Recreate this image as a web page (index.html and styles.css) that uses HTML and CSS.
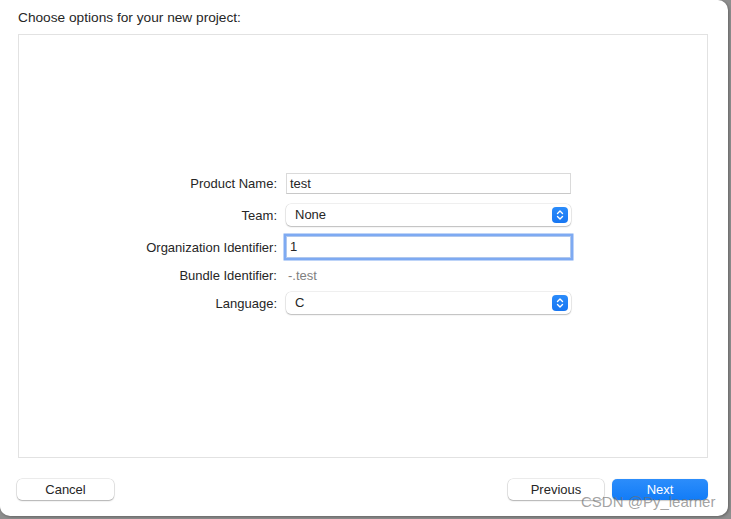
FILE: index.html
```html
<!DOCTYPE html>
<html lang="en">
<head>
    <meta charset="UTF-8">
    <meta name="viewport" content="width=device-width, initial-scale=1.0">
    <title>Choose options for your new project</title>
    <link rel="stylesheet" href="styles.css">
</head>
<body>
    <div class="window">
        <div class="title">Choose options for your new project:</div>
        <div class="panel">
            <div class="form">
                <label class="lbl">Product Name:</label>
                <div class="field">test</div>

                <label class="lbl">Team:</label>
                <div class="popup">None<span class="stepper"><svg width="16" height="16" viewBox="0 0 16 16"><path d="M5.5 6.5 L8 4 L10.5 6.5 M5.5 9.5 L8 12 L10.5 9.5" fill="none" stroke="#fff" stroke-width="1.4" stroke-linecap="round" stroke-linejoin="round"/></svg></span></div>

                <label class="lbl">Organization Identifier:</label>
                <div class="field focus">1</div>

                <label class="lbl">Bundle Identifier:</label>
                <div class="plain">-.test</div>

                <label class="lbl">Language:</label>
                <div class="popup">C<span class="stepper"><svg width="16" height="16" viewBox="0 0 16 16"><path d="M5.5 6.5 L8 4 L10.5 6.5 M5.5 9.5 L8 12 L10.5 9.5" fill="none" stroke="#fff" stroke-width="1.4" stroke-linecap="round" stroke-linejoin="round"/></svg></span></div>
            </div>
        </div>
        <div class="footer">
            <button class="btn">Cancel</button>
            <div class="right">
                <button class="btn">Previous</button>
                <button class="btn primary">Next</button>
            </div>
        </div>
        <div class="mark">CSDN @Py_learner</div>
    </div>
</body>
</html>
```

FILE: styles.css
```css
html, body {
    margin: 0;
    padding: 0;
}
body {
    width: 731px;
    height: 519px;
    background: #8e8e8e;
    font-family: "Liberation Sans", Arial, sans-serif;
    font-size: 13px;
    color: #262626;
    overflow: hidden;
}
.window {
    position: relative;
    width: 728px;
    height: 516px;
    background: #fff;
    border-radius: 0 10px 10px 10px;
    box-shadow: 1px 1px 3px rgba(0,0,0,0.3);
    display: flex;
    flex-direction: column;
}
.title {
    padding: 10px 0 0 18px;
    height: 24px;
    line-height: 15px;
    font-size: 13.7px;
}
.panel {
    margin: 0 20px 0 18px;
    height: 424px;
    border: 1px solid #e2e2e2;
    padding-top: 138px;
    box-sizing: border-box;
}
.form {
    display: grid;
    grid-template-columns: 258px 285px;
    grid-template-rows: 21px 22px 22px 14px 22px;
    column-gap: 9px;
    row-gap: 10px;
}
.lbl {
    text-align: right;
    align-self: center;
    color: #262626;
}
.field {
    border: 1px solid #dadada;
    border-bottom-color: #c8c8c8;
    padding: 0 3px;
    line-height: 19px;
}
.field.focus {
    border-color: #b0c8ee;
    box-shadow: 0 0 0 2.5px #7eaaf2;
    line-height: 20px;
}
.plain {
    align-self: center;
    color: #808080;
    padding-left: 2px;
}
.popup {
    position: relative;
    border-radius: 5px;
    background: #fff;
    box-shadow: 0 0 0 0.5px rgba(0,0,0,0.12), 0 1px 1.5px rgba(0,0,0,0.22);
    padding: 0 9px;
    line-height: 21px;
}
.stepper {
    position: absolute;
    right: 3px;
    top: 3px;
    width: 16px;
    height: 16px;
    border-radius: 4px;
    background: linear-gradient(#2a8bfa, #1776f2);
    display: block;
}
.stepper svg {
    display: block;
}
.footer {
    display: flex;
    justify-content: space-between;
    padding: 21px 20px 0 17px;
}
.right {
    display: flex;
    gap: 8px;
}
.btn {
    width: 97px;
    height: 21px;
    border: none;
    border-radius: 5px;
    background: #fff;
    box-shadow: 0 0 0 0.5px rgba(0,0,0,0.15), 0 1px 1.5px rgba(0,0,0,0.25);
    font-family: inherit;
    font-size: 13px;
    color: #262626;
    padding: 0;
}
.right .btn {
    width: 96px;
}
.btn.primary {
    background: linear-gradient(#2c8dfb, #127cf7);
    color: #fff;
    box-shadow: 0 0.5px 1px rgba(0,0,0,0.2);
}
.mark {
    position: absolute;
    left: 581px;
    top: 493px;
    font-size: 15px;
    color: rgba(110,110,110,0.65);
}
```
